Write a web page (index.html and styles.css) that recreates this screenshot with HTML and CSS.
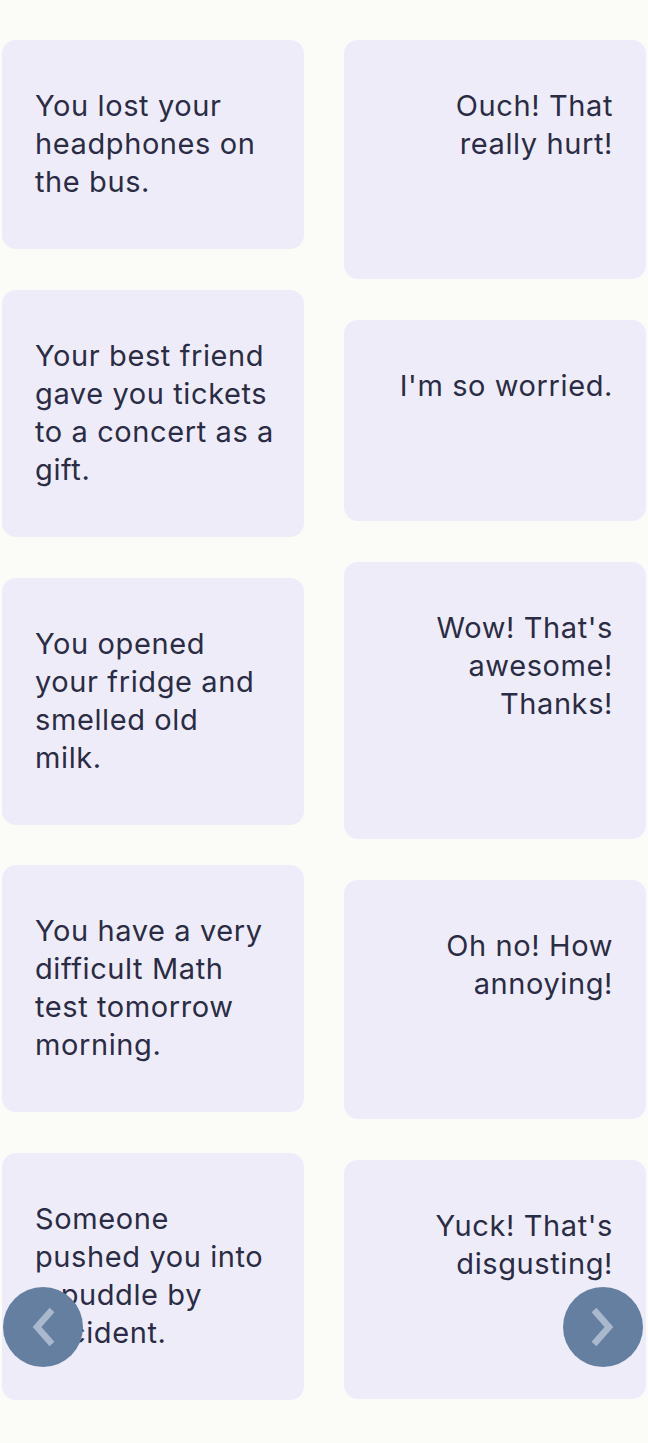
FILE: index.html
```html
<!DOCTYPE html>
<html lang="en">
<head>
<meta charset="utf-8">
<title>Match the reaction</title>
<link rel="stylesheet" href="styles.css">
</head>
<body>
<main class="board">
  <div class="column column-left">
    <div class="card card-situation">You lost your headphones on the bus.</div>
    <div class="card card-situation">Your best friend gave you tickets to a concert as a gift.</div>
    <div class="card card-situation">You opened your fridge and smelled old<br>milk.</div>
    <div class="card card-situation">You have a very difficult Math test tomorrow morning.</div>
    <div class="card card-situation">Someone pushed you into a puddle by accident.</div>
  </div>
  <div class="column column-right">
    <div class="card card-reaction">Ouch! That really hurt!</div>
    <div class="card card-reaction">I'm so worried.</div>
    <div class="card card-reaction">Wow! That's awesome! Thanks!</div>
    <div class="card card-reaction">Oh no! How annoying!</div>
    <div class="card card-reaction">Yuck! That's disgusting!</div>
  </div>
</main>
<button class="nav nav-prev" aria-label="Previous">
  <svg viewBox="0 0 40 40" width="40" height="40"><path d="M29 3 L14 20 L29 37" fill="none" stroke="currentColor" stroke-width="6.5" stroke-linecap="butt" stroke-linejoin="miter"/></svg>
</button>
<button class="nav nav-next" aria-label="Next">
  <svg viewBox="0 0 40 40" width="40" height="40"><path d="M11 3 L26 20 L11 37" fill="none" stroke="currentColor" stroke-width="6.5" stroke-linecap="butt" stroke-linejoin="miter"/></svg>
</button>
</body>
</html>
```
FILE: styles.css
```css
html, body {
  margin: 0;
  padding: 0;
  background: #fbfbf7;
}
body {
  font-family: Inter, "Noto Sans", sans-serif;
  color: #2a2c45;
}
.board {
  display: grid;
  grid-template-columns: 302px 302px;
  column-gap: 40px;
  padding: 40px 2px 43px 2px;
  align-items: start;
}
.column {
  display: flex;
  flex-direction: column;
  gap: 41px;
}
.column-left {
  gap: 40.75px;
}
.card {
  background: #efecf9;
  border-radius: 14px;
  font-size: 29px;
  line-height: 38px;
  letter-spacing: 0.6px;
  padding: 47px 33px;
}
.card-situation {
  padding-right: 28px;
  padding-bottom: 48px;
}
.card-reaction {
  text-align: right;
  padding-left: 28px;
  padding-bottom: 116px;
}
.nav {
  position: fixed;
  bottom: 76px;
  width: 80px;
  height: 80px;
  border-radius: 50%;
  border: none;
  padding: 0;
  background: #647fa0;
  color: #a9b8cc;
  display: flex;
  align-items: center;
  justify-content: center;
}
.nav-prev { left: 3px; }
.nav-next { right: 5px; }
.nav svg { display: block; }
```
